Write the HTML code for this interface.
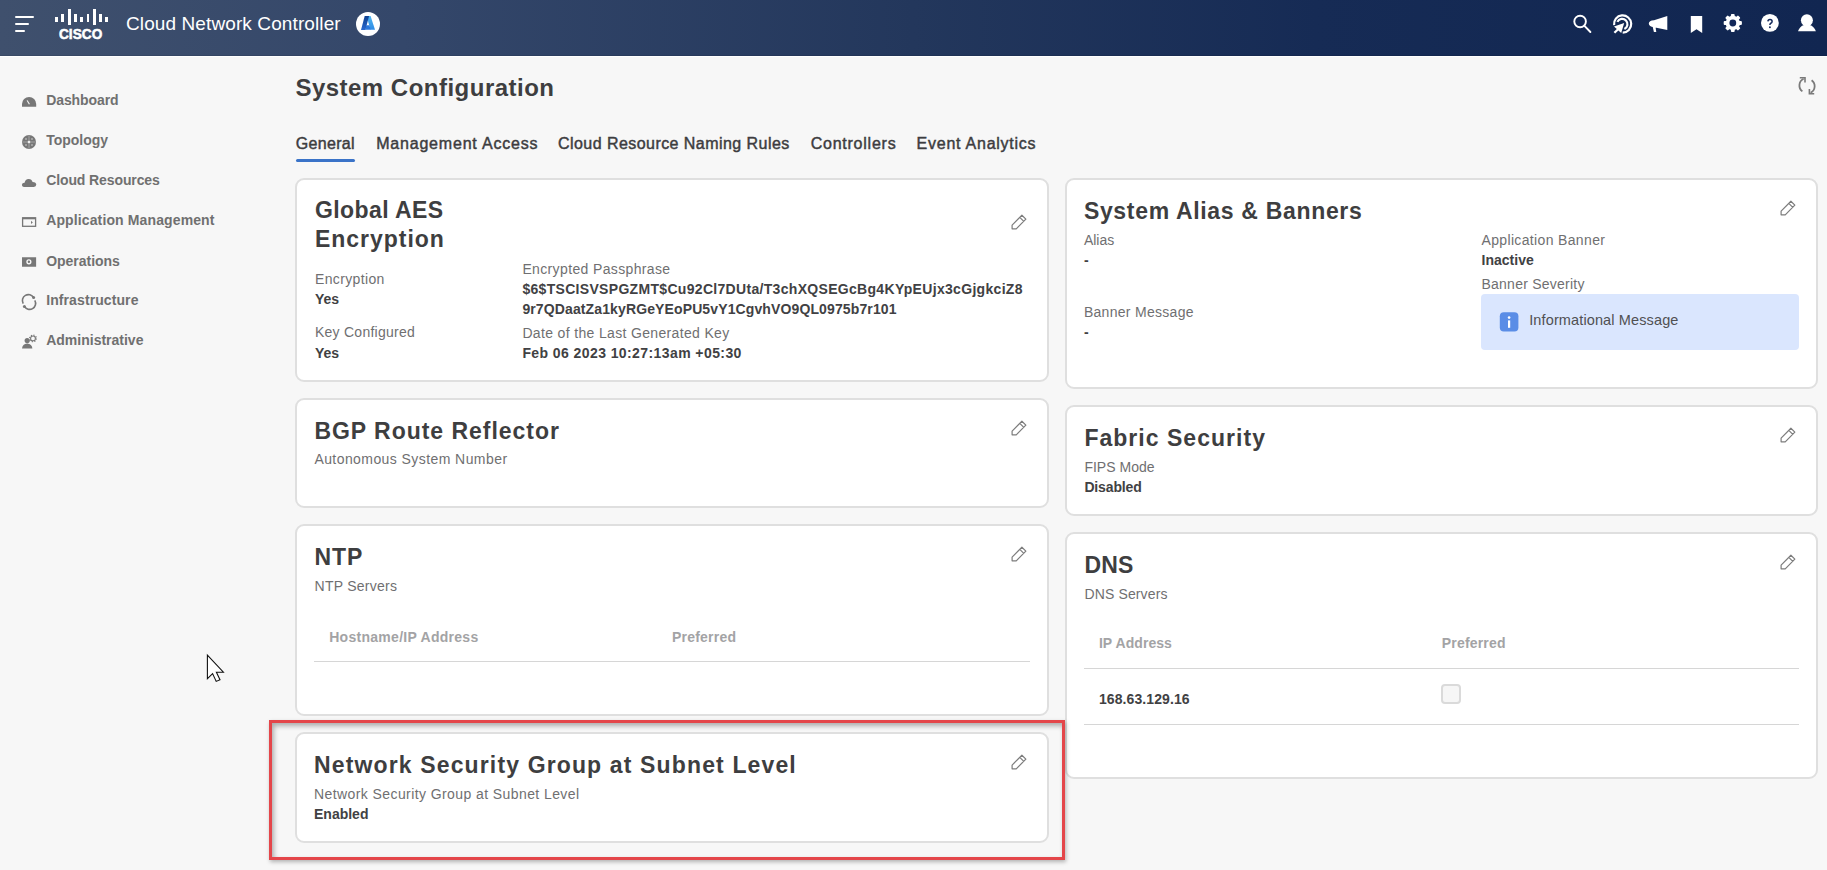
<!DOCTYPE html>
<html><head><meta charset="utf-8"><title>System Configuration</title>
<style>
html,body{margin:0;padding:0;}
body{width:1827px;height:870px;position:relative;overflow:hidden;background:#f7f7f7;font-family:"Liberation Sans",sans-serif;}
.t{position:absolute;white-space:nowrap;}
</style></head><body>
<div style="position:absolute;left:0px;top:0px;width:1827px;height:56px;background:linear-gradient(90deg,#3f506d 0%,#34476a 22%,#23375c 50%,#162b55 72%,#112651 100%);"></div>
<div style="position:absolute;left:0px;top:55px;width:1827px;height:1px;background:rgba(0,0,0,0.07);"></div>
<div style="position:absolute;left:0px;top:56px;width:1827px;height:1px;background:#ffffff;"></div>
<div style="position:absolute;left:15px;top:16px;width:19px;height:2px;background:#fff;border-radius:1px;"></div>
<div style="position:absolute;left:15px;top:23px;width:14px;height:2px;background:#fff;border-radius:1px;"></div>
<div style="position:absolute;left:15px;top:30px;width:10px;height:2px;background:#fff;border-radius:1px;"></div>
<div style="position:absolute;left:55.1px;top:16.7px;width:3.0px;height:5.0px;background:#fff;"></div>
<div style="position:absolute;left:61.4px;top:13.5px;width:2.4px;height:8.2px;background:#fff;"></div>
<div style="position:absolute;left:67.9px;top:8.9px;width:3.0px;height:16.0px;background:#fff;"></div>
<div style="position:absolute;left:74.2px;top:13.5px;width:2.4px;height:8.2px;background:#fff;"></div>
<div style="position:absolute;left:80.3px;top:16.7px;width:3.0px;height:5.0px;background:#fff;"></div>
<div style="position:absolute;left:87.1px;top:13.5px;width:2.4px;height:8.2px;background:#fff;"></div>
<div style="position:absolute;left:93.2px;top:8.9px;width:3.0px;height:16.0px;background:#fff;"></div>
<div style="position:absolute;left:99.2px;top:13.5px;width:2.4px;height:8.2px;background:#fff;"></div>
<div style="position:absolute;left:105.3px;top:16.7px;width:3.0px;height:5.0px;background:#fff;"></div>
<div class="t" style="left:59.40px;top:26.57px;font-size:14.8px;line-height:14.8px;color:#fff;font-weight:700;letter-spacing:0.031px;-webkit-text-stroke:0.55px #fff;transform:scaleX(0.92);transform-origin:0 0;">CISCO</div>
<div class="t" style="left:126.00px;top:13.72px;font-size:19px;line-height:19px;color:#fff;letter-spacing:0.104px;">Cloud Network Controller</div>
<svg style="position:absolute;left:356px;top:12px" width="24" height="24" viewBox="0 0 24 24">
<circle cx="12" cy="12" r="12" fill="#fff"/>
<defs><linearGradient id="az1" x1="0" y1="0" x2="0" y2="1"><stop offset="0" stop-color="#0d3f8f"/><stop offset="1" stop-color="#2a6ad0"/></linearGradient>
<linearGradient id="az2" x1="0" y1="0" x2="0" y2="1"><stop offset="0" stop-color="#4fb6f0"/><stop offset="1" stop-color="#2f8be6"/></linearGradient></defs>
<path d="M10.6 4.1 L14.6 4.1 L19 17.8 L14.4 17.8 Z" fill="url(#az2)"/>
<path d="M10.3 13.3 L13.3 13.3 L14.9 17.8 L9.2 17.8 Z" fill="#2b78dc"/>
<path d="M8.7 4.1 L13.1 4.1 L9.4 18.1 L5 18.1 Z" fill="url(#az1)"/>
</svg>
<svg style="position:absolute;left:1566px;top:8px" width="260" height="32" viewBox="1566 8 260 32">
<g fill="none" stroke="#fff" stroke-width="2.1">
<circle cx="1580.1" cy="21.5" r="5.8" stroke-width="1.9"/>
<path d="M1584.2 25.6 L1590.4 32" stroke-linecap="round" stroke-width="1.9"/>
<path d="M1614.1 25.2 A8.6 8.6 0 1 1 1622.7 32.6" stroke-width="2.2"/>
<path d="M1617.4 21.9 A5.3 5.3 0 1 1 1624.4 29" stroke-width="2.2"/>
</g>
<path d="M1624.2 22.9 L1614 26.4 L1616.8 28.9 L1613.6 32 L1615.2 33.6 L1618.4 30.4 L1621.2 33 Z" fill="#fff"/>
<path d="M1654 20.2 L1667.3 15.9 L1667.3 30.1 L1654 27.2 Q1648.8 26.6 1648.8 23.6 Q1648.9 20.6 1654 20.2 Z M1652.4 25.6 L1655.4 26.2 L1656.3 31.9 L1653.9 31.9 Z" fill="#fff"/>
<path d="M1690.8 15.9 L1702.2 15.9 L1702.2 33 L1696.5 29.2 L1690.8 33 Z" fill="#fff"/>
<g fill="#fff"><circle cx="1732.8" cy="23.0" r="7.2"/><rect x="1730.90" y="13.90" width="3.8" height="4" rx="1" transform="rotate(0 1732.8 23.0)"/><rect x="1730.90" y="13.90" width="3.8" height="4" rx="1" transform="rotate(45 1732.8 23.0)"/><rect x="1730.90" y="13.90" width="3.8" height="4" rx="1" transform="rotate(90 1732.8 23.0)"/><rect x="1730.90" y="13.90" width="3.8" height="4" rx="1" transform="rotate(135 1732.8 23.0)"/><rect x="1730.90" y="13.90" width="3.8" height="4" rx="1" transform="rotate(180 1732.8 23.0)"/><rect x="1730.90" y="13.90" width="3.8" height="4" rx="1" transform="rotate(225 1732.8 23.0)"/><rect x="1730.90" y="13.90" width="3.8" height="4" rx="1" transform="rotate(270 1732.8 23.0)"/><rect x="1730.90" y="13.90" width="3.8" height="4" rx="1" transform="rotate(315 1732.8 23.0)"/></g>
<circle cx="1732.8" cy="23.0" r="3.4" fill="#12275a"/>
<circle cx="1769.9" cy="22.9" r="8.9" fill="#fff"/>
<path d="M1767.9 21.4 Q1768 19.6 1770 19.6 Q1772.1 19.6 1772.1 21.4 Q1772.1 22.6 1770.8 23.2 Q1769.9 23.7 1769.9 25" fill="none" stroke="#12275a" stroke-width="1.5"/>
<circle cx="1769.9" cy="27.2" r="0.95" fill="#12275a"/>
<circle cx="1806.9" cy="20.2" r="6" fill="#fff"/>
<path d="M1798 31.3 Q1799.8 26.2 1804 25 L1809.8 25 Q1814 26.2 1815.9 31.3 Z" fill="#fff"/>
</svg>
<div class="t" style="left:46.20px;top:93.15px;font-size:14px;line-height:14px;color:#707070;font-weight:700;letter-spacing:-0.087px;">Dashboard</div>
<div class="t" style="left:46.20px;top:133.15px;font-size:14px;line-height:14px;color:#707070;font-weight:700;">Topology</div>
<div class="t" style="left:46.20px;top:173.45px;font-size:14px;line-height:14px;color:#707070;font-weight:700;letter-spacing:-0.107px;">Cloud Resources</div>
<div class="t" style="left:46.20px;top:213.25px;font-size:14px;line-height:14px;color:#707070;font-weight:700;letter-spacing:0.123px;">Application Management</div>
<div class="t" style="left:46.20px;top:253.65px;font-size:14px;line-height:14px;color:#707070;font-weight:700;letter-spacing:-0.031px;">Operations</div>
<div class="t" style="left:46.20px;top:292.95px;font-size:14px;line-height:14px;color:#707070;font-weight:700;letter-spacing:0.094px;">Infrastructure</div>
<div class="t" style="left:46.20px;top:333.35px;font-size:14px;line-height:14px;color:#707070;font-weight:700;">Administrative</div>
<svg style="position:absolute;left:20px;top:90px" width="20" height="265" viewBox="20 90 20 265">
<g fill="#777">
<path d="M22 106.7 L22 104 A7.1 7.1 0 0 1 36.2 104 L36.2 106.7 Z"/>
<circle cx="29" cy="142" r="7"/>
<path d="M23.8 186.9 Q21.8 186.8 21.9 184.7 Q22.1 182.6 24.6 182.7 Q25.2 179.2 28.6 178.9 Q31.6 178.8 32.6 181.9 Q36.3 182.2 36.3 184.6 Q36.2 186.9 33.8 186.9 Z"/>
<path d="M22 257.2 h14.1 v9.5 h-14.1 Z"/>
</g>
<path d="M26.6 100.6 L27.6 100.2 L29.9 104 L28.9 104.5 Z" fill="#f7f7f7"/>
<g fill="none" stroke="#a8a8a8" stroke-width="0.9">
<path d="M29 135.5 V148.5 M22.5 142 H35.5"/>
</g>
<g fill="#d8d8d8">
<circle cx="26" cy="139" r="0.8"/><circle cx="32" cy="139" r="0.8"/><circle cx="26" cy="145" r="0.8"/><circle cx="32" cy="145" r="0.8"/>
</g>
<circle cx="29" cy="142" r="1.3" fill="#eee"/>
<circle cx="28.9" cy="261.8" r="1.9" fill="none" stroke="#f7f7f7" stroke-width="1.4"/>
<g fill="none" stroke="#777" stroke-width="1.3">
<rect x="22.6" y="217.8" width="13" height="8.5"/>
<path d="M22.6 218.4 H35.6" stroke-width="1.8"/>
<path d="M23.2 303.6 A6 6 0 0 1 33.6 297.6" stroke-width="1.6"/>
<path d="M34.8 300.4 A6 6 0 0 1 24.4 306.4" stroke-width="1.6"/>
</g>
<path d="M31 220.7 L32.8 222.4 L31 224.1 Z" fill="#777"/>
<circle cx="33.6" cy="297.6" r="1.5" fill="#777"/>
<circle cx="24.4" cy="306.4" r="1.5" fill="#777"/>
<g fill="#777">
<circle cx="27.2" cy="340.6" r="2.6"/>
<path d="M22 348.4 Q22.4 344.2 27.2 343.6 Q32 344.2 32.4 348.4 Z"/>
</g>
<circle cx="33" cy="338.4" r="2.4" fill="none" stroke="#777" stroke-width="1.1"/>
<circle cx="33" cy="338.4" r="3.3" fill="none" stroke="#777" stroke-width="1.3" stroke-dasharray="1.1 1.5"/>
</svg>
<div class="t" style="left:295.40px;top:76.28px;font-size:24px;line-height:24px;color:#3e3e40;font-weight:700;letter-spacing:0.486px;">System Configuration</div>
<svg style="position:absolute;left:1796px;top:74px" width="22" height="24" viewBox="1796 74 22 24">
<g fill="none" stroke="#7a7a7a" stroke-width="1.8">
<path d="M1802.4 91.4 A7.4 7.4 0 0 1 1803.6 78.8"/>
<path d="M1811.6 80.2 A7.4 7.4 0 0 1 1810.6 92.8"/>
</g>
<path d="M1799.8 77 L1805.8 77 L1805.8 82.6 L1804.2 82.6 L1804.2 78.6 L1799.8 78.6 Z" fill="#7a7a7a"/>
<path d="M1808.6 94.6 L1814.2 94.6 L1814.2 93 L1810.2 93 L1810.2 89 L1808.6 89 Z" fill="#7a7a7a"/>
</svg>
<div class="t" style="left:295.70px;top:136.36px;font-size:16px;line-height:16px;color:#3d3d3f;letter-spacing:0.339px;-webkit-text-stroke:0.45px #3d3d3f;">General</div>
<div class="t" style="left:376.20px;top:136.36px;font-size:16px;line-height:16px;color:#3d3d3f;letter-spacing:0.799px;-webkit-text-stroke:0.45px #3d3d3f;">Management Access</div>
<div class="t" style="left:558.00px;top:136.36px;font-size:16px;line-height:16px;color:#3d3d3f;letter-spacing:0.445px;-webkit-text-stroke:0.45px #3d3d3f;">Cloud Resource Naming Rules</div>
<div class="t" style="left:810.70px;top:136.36px;font-size:16px;line-height:16px;color:#3d3d3f;letter-spacing:0.758px;-webkit-text-stroke:0.45px #3d3d3f;">Controllers</div>
<div class="t" style="left:916.60px;top:136.36px;font-size:16px;line-height:16px;color:#3d3d3f;letter-spacing:0.752px;-webkit-text-stroke:0.45px #3d3d3f;">Event Analytics</div>
<div style="position:absolute;left:295.5px;top:159px;width:59.5px;height:3px;background:#3a73c8;border-radius:2px;"></div>
<div style="position:absolute;left:295px;top:178px;width:754px;height:204px;box-sizing:border-box;background:#fff;border:2px solid #dfdfdf;border-radius:9px;"></div>
<svg style="position:absolute;left:1010px;top:213px" width="18" height="18" viewBox="0 0 18 18">
<path d="M2.1 15.8 L2.1 12.05 L11.9 2.25 L15.85 6.2 L6.25 15.8 Z M9.8 4.3 L13.8 8.3" fill="none" stroke="#7c7c7c" stroke-width="1.2" stroke-linejoin="round"/>
</svg>
<div class="t" style="left:314.90px;top:199.13px;font-size:23px;line-height:23px;color:#3e3e40;font-weight:700;letter-spacing:0.434px;">Global AES</div>
<div class="t" style="left:314.90px;top:228.43px;font-size:23px;line-height:23px;color:#3e3e40;font-weight:700;letter-spacing:0.986px;">Encryption</div>
<div class="t" style="left:315.00px;top:272.35px;font-size:14px;line-height:14px;color:#6f6f71;letter-spacing:0.353px;">Encryption</div>
<div class="t" style="left:315.00px;top:291.95px;font-size:14px;line-height:14px;color:#414143;font-weight:700;">Yes</div>
<div class="t" style="left:315.00px;top:325.45px;font-size:14px;line-height:14px;color:#6f6f71;letter-spacing:0.249px;">Key Configured</div>
<div class="t" style="left:315.00px;top:345.75px;font-size:14px;line-height:14px;color:#414143;font-weight:700;">Yes</div>
<div class="t" style="left:522.40px;top:261.95px;font-size:14px;line-height:14px;color:#6f6f71;letter-spacing:0.362px;">Encrypted Passphrase</div>
<div class="t" style="left:522.40px;top:281.85px;font-size:14px;line-height:14px;color:#414143;font-weight:700;letter-spacing:0.311px;">$6$TSCISVSPGZMT$Cu92Cl7DUta/T3chXQSEGcBg4KYpEUjx3cGjgkciZ8</div>
<div class="t" style="left:522.40px;top:301.75px;font-size:14px;line-height:14px;color:#414143;font-weight:700;letter-spacing:0.122px;">9r7QDaatZa1kyRGeYEoPU5vY1CgvhVO9QL0975b7r101</div>
<div class="t" style="left:522.40px;top:325.95px;font-size:14px;line-height:14px;color:#6f6f71;letter-spacing:0.343px;">Date of the Last Generated Key</div>
<div class="t" style="left:522.40px;top:345.65px;font-size:14px;line-height:14px;color:#414143;font-weight:700;letter-spacing:0.414px;">Feb 06 2023 10:27:13am +05:30</div>
<div style="position:absolute;left:295px;top:398px;width:754px;height:110px;box-sizing:border-box;background:#fff;border:2px solid #dfdfdf;border-radius:9px;"></div>
<svg style="position:absolute;left:1010px;top:419px" width="18" height="18" viewBox="0 0 18 18">
<path d="M2.1 15.8 L2.1 12.05 L11.9 2.25 L15.85 6.2 L6.25 15.8 Z M9.8 4.3 L13.8 8.3" fill="none" stroke="#7c7c7c" stroke-width="1.2" stroke-linejoin="round"/>
</svg>
<div class="t" style="left:314.40px;top:419.83px;font-size:23px;line-height:23px;color:#3e3e40;font-weight:700;letter-spacing:0.969px;">BGP Route Reflector</div>
<div class="t" style="left:314.40px;top:451.85px;font-size:14px;line-height:14px;color:#6f6f71;letter-spacing:0.426px;">Autonomous System Number</div>
<div style="position:absolute;left:295px;top:524px;width:754px;height:192px;box-sizing:border-box;background:#fff;border:2px solid #dfdfdf;border-radius:9px;"></div>
<svg style="position:absolute;left:1010px;top:545px" width="18" height="18" viewBox="0 0 18 18">
<path d="M2.1 15.8 L2.1 12.05 L11.9 2.25 L15.85 6.2 L6.25 15.8 Z M9.8 4.3 L13.8 8.3" fill="none" stroke="#7c7c7c" stroke-width="1.2" stroke-linejoin="round"/>
</svg>
<div class="t" style="left:314.60px;top:545.73px;font-size:23px;line-height:23px;color:#3e3e40;font-weight:700;letter-spacing:0.900px;">NTP</div>
<div class="t" style="left:314.60px;top:579.05px;font-size:14px;line-height:14px;color:#6f6f71;letter-spacing:0.244px;">NTP Servers</div>
<div class="t" style="left:329.20px;top:629.65px;font-size:14px;line-height:14px;color:#a3a3a5;font-weight:700;letter-spacing:0.283px;">Hostname/IP Address</div>
<div class="t" style="left:672.00px;top:629.65px;font-size:14px;line-height:14px;color:#a3a3a5;font-weight:700;letter-spacing:0.219px;">Preferred</div>
<div style="position:absolute;left:314px;top:661px;width:716px;height:1px;background:#d6d6d6;"></div>
<div style="position:absolute;left:295px;top:732px;width:754px;height:111px;box-sizing:border-box;background:#fff;border:2px solid #dfdfdf;border-radius:9px;"></div>
<svg style="position:absolute;left:1010px;top:753px" width="18" height="18" viewBox="0 0 18 18">
<path d="M2.1 15.8 L2.1 12.05 L11.9 2.25 L15.85 6.2 L6.25 15.8 Z M9.8 4.3 L13.8 8.3" fill="none" stroke="#7c7c7c" stroke-width="1.2" stroke-linejoin="round"/>
</svg>
<div class="t" style="left:314.00px;top:753.83px;font-size:23px;line-height:23px;color:#3e3e40;font-weight:700;letter-spacing:1.138px;">Network Security Group at Subnet Level</div>
<div class="t" style="left:314.00px;top:786.85px;font-size:14px;line-height:14px;color:#6f6f71;letter-spacing:0.413px;">Network Security Group at Subnet Level</div>
<div class="t" style="left:314.00px;top:806.55px;font-size:14px;line-height:14px;color:#414143;font-weight:700;">Enabled</div>
<div style="position:absolute;left:1065px;top:178px;width:753px;height:211px;box-sizing:border-box;background:#fff;border:2px solid #dfdfdf;border-radius:9px;"></div>
<svg style="position:absolute;left:1779px;top:199px" width="18" height="18" viewBox="0 0 18 18">
<path d="M2.1 15.8 L2.1 12.05 L11.9 2.25 L15.85 6.2 L6.25 15.8 Z M9.8 4.3 L13.8 8.3" fill="none" stroke="#7c7c7c" stroke-width="1.2" stroke-linejoin="round"/>
</svg>
<div class="t" style="left:1083.90px;top:200.23px;font-size:23px;line-height:23px;color:#3e3e40;font-weight:700;letter-spacing:0.672px;">System Alias &amp; Banners</div>
<div class="t" style="left:1083.90px;top:233.35px;font-size:14px;line-height:14px;color:#6f6f71;letter-spacing:-0.011px;">Alias</div>
<div class="t" style="left:1084.00px;top:253.15px;font-size:14px;line-height:14px;color:#414143;font-weight:700;">-</div>
<div class="t" style="left:1083.90px;top:305.15px;font-size:14px;line-height:14px;color:#6f6f71;letter-spacing:0.293px;">Banner Message</div>
<div class="t" style="left:1084.00px;top:325.15px;font-size:14px;line-height:14px;color:#414143;font-weight:700;">-</div>
<div class="t" style="left:1481.50px;top:233.25px;font-size:14px;line-height:14px;color:#6f6f71;letter-spacing:0.348px;">Application Banner</div>
<div class="t" style="left:1481.50px;top:253.15px;font-size:14px;line-height:14px;color:#414143;font-weight:700;letter-spacing:0.027px;">Inactive</div>
<div class="t" style="left:1481.50px;top:276.95px;font-size:14px;line-height:14px;color:#6f6f71;letter-spacing:0.237px;">Banner Severity</div>
<div style="position:absolute;left:1481px;top:294px;width:318px;height:56px;background:#dae6fe;border-radius:4px;"></div>
<svg style="position:absolute;left:1499px;top:312px" width="20" height="20" viewBox="0 0 20 20">
<rect x="0.8" y="0.2" width="18.6" height="19.2" rx="4" fill="#5a8de6"/>
<circle cx="10.1" cy="5.6" r="1.3" fill="#fff"/>
<rect x="9" y="8.4" width="2.2" height="7.4" fill="#fff"/>
</svg>
<div class="t" style="left:1529.20px;top:312.83px;font-size:14.5px;line-height:14.5px;color:#505052;letter-spacing:0.126px;">Informational Message</div>
<div style="position:absolute;left:1065px;top:405px;width:753px;height:111px;box-sizing:border-box;background:#fff;border:2px solid #dfdfdf;border-radius:9px;"></div>
<svg style="position:absolute;left:1779px;top:426px" width="18" height="18" viewBox="0 0 18 18">
<path d="M2.1 15.8 L2.1 12.05 L11.9 2.25 L15.85 6.2 L6.25 15.8 Z M9.8 4.3 L13.8 8.3" fill="none" stroke="#7c7c7c" stroke-width="1.2" stroke-linejoin="round"/>
</svg>
<div class="t" style="left:1084.40px;top:426.63px;font-size:23px;line-height:23px;color:#3e3e40;font-weight:700;letter-spacing:1.028px;">Fabric Security</div>
<div class="t" style="left:1084.40px;top:459.95px;font-size:14px;line-height:14px;color:#6f6f71;letter-spacing:0.011px;">FIPS Mode</div>
<div class="t" style="left:1084.40px;top:479.65px;font-size:14px;line-height:14px;color:#414143;font-weight:700;letter-spacing:-0.133px;">Disabled</div>
<div style="position:absolute;left:1065px;top:532px;width:753px;height:247px;box-sizing:border-box;background:#fff;border:2px solid #dfdfdf;border-radius:9px;"></div>
<svg style="position:absolute;left:1779px;top:553px" width="18" height="18" viewBox="0 0 18 18">
<path d="M2.1 15.8 L2.1 12.05 L11.9 2.25 L15.85 6.2 L6.25 15.8 Z M9.8 4.3 L13.8 8.3" fill="none" stroke="#7c7c7c" stroke-width="1.2" stroke-linejoin="round"/>
</svg>
<div class="t" style="left:1084.60px;top:553.93px;font-size:23px;line-height:23px;color:#3e3e40;font-weight:700;letter-spacing:0.119px;">DNS</div>
<div class="t" style="left:1084.60px;top:586.55px;font-size:14px;line-height:14px;color:#6f6f71;letter-spacing:0.113px;">DNS Servers</div>
<div class="t" style="left:1098.90px;top:636.35px;font-size:14px;line-height:14px;color:#a3a3a5;font-weight:700;letter-spacing:0.071px;">IP Address</div>
<div class="t" style="left:1441.80px;top:636.35px;font-size:14px;line-height:14px;color:#a3a3a5;font-weight:700;letter-spacing:0.181px;">Preferred</div>
<div style="position:absolute;left:1084px;top:668px;width:715px;height:1px;background:#d6d6d6;"></div>
<div class="t" style="left:1098.90px;top:692.15px;font-size:14px;line-height:14px;color:#414143;font-weight:700;letter-spacing:0.101px;">168.63.129.16</div>
<div style="position:absolute;left:1441px;top:684px;width:20px;height:20px;box-sizing:border-box;background:#f6f6f6;border:2px solid #dadada;border-radius:4px;"></div>
<div style="position:absolute;left:1084px;top:724px;width:715px;height:1px;background:#d6d6d6;"></div>
<div style="position:absolute;left:269px;top:720px;width:796px;height:140px;box-sizing:border-box;border:3px solid #e4464a;box-shadow:1px 2px 4px rgba(0,0,0,0.28), inset 2px 3px 5px rgba(0,0,0,0.3);"></div>
<svg style="position:absolute;left:205px;top:653px" width="20" height="30" viewBox="205 653 20 30">
<path d="M207.4 655.2 L207.4 678.6 L212.6 673.6 L216.2 681.4 L220 679.8 L216.4 672.2 L223.4 672.2 Z" fill="#fff" stroke="#111" stroke-width="1.1" stroke-linejoin="miter"/>
</svg>
</body></html>
